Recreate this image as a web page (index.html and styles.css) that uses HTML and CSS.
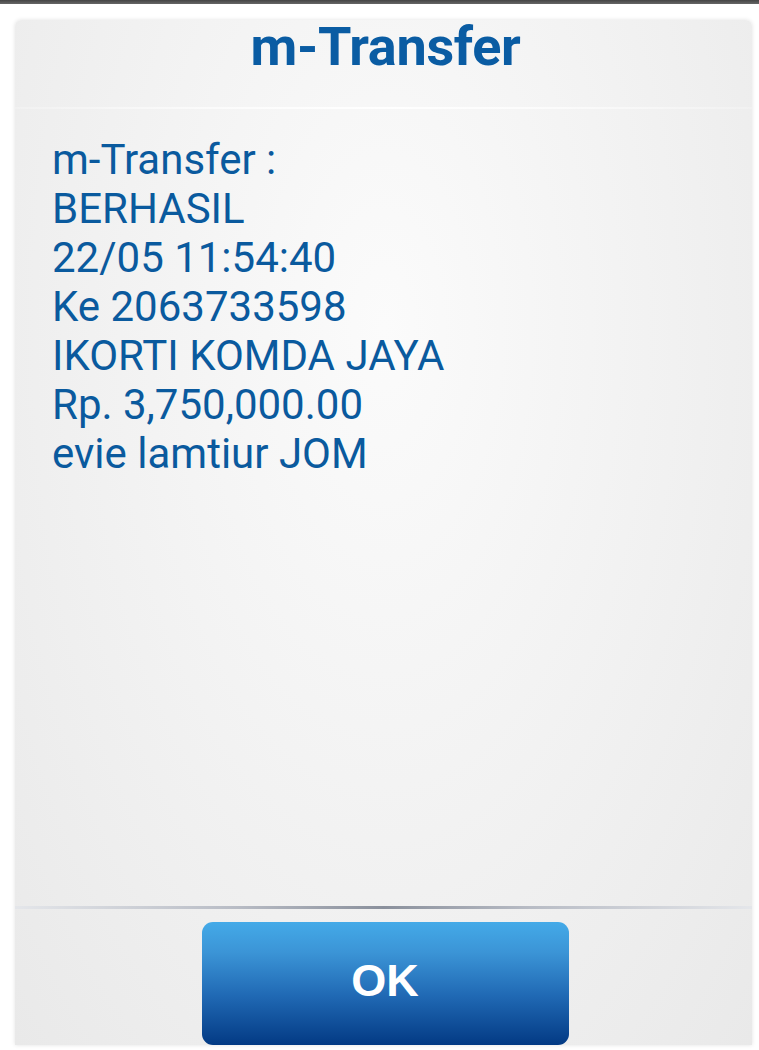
FILE: index.html
```html
<!DOCTYPE html>
<html>
<head>
<meta charset="utf-8">
<link rel="stylesheet" href="styles.css">
</head>
<body>
<div class="topbar"></div>
<div class="card">
  <div class="title"><span class="title-text">m-Transfer</span></div>
  <div class="sep-light"></div>
  <div class="message">
    <div>m-Transfer :</div>
    <div>BERHASIL</div>
    <div>22/05 11:54:40</div>
    <div>Ke 2063733598</div>
    <div>IKORTI KOMDA JAYA</div>
    <div>Rp. 3,750,000.00</div>
    <div>evie lamtiur JOM</div>
  </div>
  <div class="sep-dark"></div>
  <div class="footer">
    <div class="btn">OK</div>
  </div>
</div>
</body>
</html>
```
FILE: styles.css
```css
html, body {
  margin: 0;
  padding: 0;
  background: #ffffff;
  width: 759px;
  height: 1050px;
  overflow: hidden;
  font-family: Roboto, "Noto Sans", sans-serif;
}
.topbar {
  height: 4px;
  background: linear-gradient(#444, #666);
}
.card {
  margin: 16px 7px 0 15px;
  height: 1025px;
  border-radius: 6px 6px 0 0;
  background: radial-gradient(ellipse at 50% 30%, #fbfbfb 0%, #f3f3f3 45%, #e9e9e9 100%);
  box-shadow: 0 0 4px rgba(0,0,0,0.12);
  display: flex;
  flex-direction: column;
}
.title {
  height: 87px;
  box-sizing: border-box;
  padding-top: 0;
  display: flex;
  justify-content: center;
}
.title-text {
  color: #0a5ca3;
  font-weight: 700;
  font-size: 54px;
  line-height: 54px;
  letter-spacing: -0.3px;
  margin-left: 4px;
}
.sep-light {
  height: 2px;
  background: linear-gradient(90deg, rgba(255,255,255,0.2), #ffffff 50%, rgba(255,255,255,0.2));
}
.message {
  flex: 1;
  padding: 26px 0 0 37px;
  color: #0a5a9e;
  font-size: 42px;
  line-height: 49px;
}
.sep-dark {
  height: 3px;
  background: linear-gradient(90deg, #e4e6ea 0%, #b8bcc5 30%, #8a909c 50%, #b8bcc5 70%, #e4e6ea 100%);
}
.footer {
  height: 136px;
  display: flex;
  justify-content: center;
  padding-top: 13px;
  box-sizing: border-box;
}
.btn {
  width: 367px;
  height: 123px;
  margin-left: 3px;
  border-radius: 11px;
  background: linear-gradient(#44aae8 0%, #3b94d6 25%, #2069b4 60%, #033a84 100%);
  color: #ffffff;
  font-family: "Liberation Sans", Arial, sans-serif;
  font-weight: 700;
  font-size: 45px;
  line-height: 50px;
  padding-bottom: 6px;
  box-sizing: border-box;
  display: flex;
  align-items: center;
  justify-content: center;
}
```
